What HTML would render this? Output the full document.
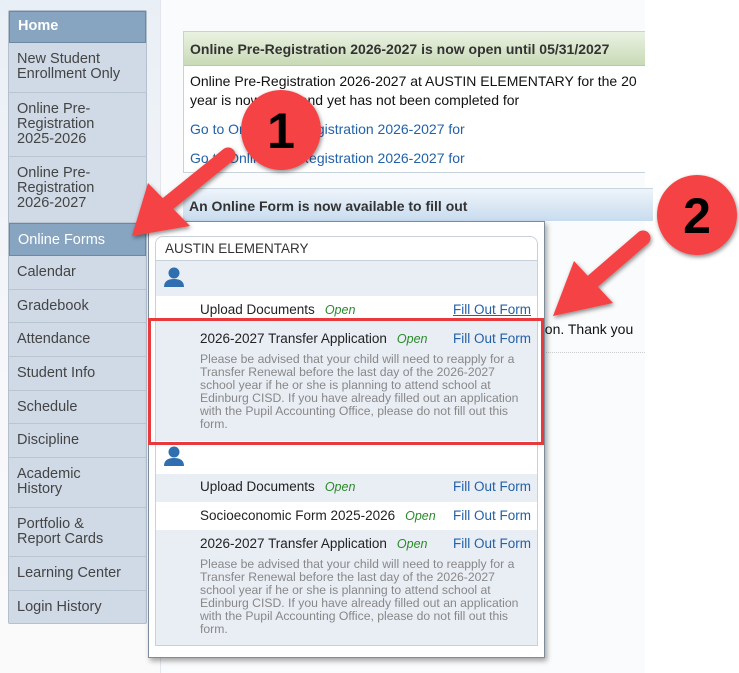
<!DOCTYPE html>
<html><head><meta charset="utf-8"><style>
*{margin:0;padding:0;box-sizing:border-box}
body{width:739px;height:673px;overflow:hidden;background:#fff;font-family:"Liberation Sans",Arial,sans-serif;position:relative}
.bgl{position:absolute;left:0;top:0;width:160px;height:673px;background:linear-gradient(#e9eff6,#f7f8fa 400px,#fafafa)}
.main{position:absolute;left:160px;top:0;width:485px;height:673px;background:#fafbfc;border-left:1px solid #e2e6ea}
.side{position:absolute;left:8px;top:10px;width:139px;border:1px solid #b4c0cc;border-radius:2px;background:#cfdae6}
.side div{border-bottom:1px solid #b9c5d1;color:#444;font-size:14.5px;line-height:15px;padding:9px 30px 8px 8px}
.side .sel{background:#87a5c0;color:#fff;border:1px solid #6c88a2}
.p1{position:absolute;left:183px;top:31px;width:470px;height:142px;border:1px solid #c8d2da;background:#fff}
.p1 .h{height:34px;background:linear-gradient(#eaf2e2,#c8dab6);font-weight:bold;font-size:14px;color:#333;padding:9px 6px;border-bottom:1px solid #b8c8a8}
.t{position:absolute;font-size:14px;color:#111;white-space:nowrap}
.a{color:#2362a8}
.p2h{position:absolute;left:183px;top:188px;width:470px;height:33px;background:linear-gradient(#eef4fa,#c8dcef);border-top:1px solid #c8d4e0;font-weight:bold;font-size:14px;color:#333;padding:9px 6px}
.pop{position:absolute;left:148px;top:221px;width:397px;height:437px;background:#fff;border:1px solid #7d8c9c;box-shadow:2px 3px 5px rgba(0,0,0,.35)}
.box{position:absolute;left:6px;top:14px;width:383px;height:410px;border:1px solid #c8d0da;border-radius:8px 8px 0 0;background:#e9edf4;overflow:hidden}
.r{position:absolute;left:0;width:100%}
.w{background:#fff}
.nm{position:absolute;left:44px;font-size:13.5px;color:#222;white-space:nowrap}
.op{color:#2a8a2a;font-style:italic;font-size:12.5px;margin-left:10px}
.ff{position:absolute;left:297px;font-size:13.5px;color:#2362a8}
.ds{position:absolute;left:44px;width:332px;font-size:12.2px;line-height:13px;color:#888}
.ic{position:absolute;left:7px}
</style></head><body>
<div class="bgl"></div>
<div class="main"></div>
<div class="side">
<div class="sel" style="font-weight:bold;height:32px;padding-top:7px">Home</div>
<div style="height:50px;padding-right:4px">New Student Enrollment Only</div>
<div style="height:64px">Online Pre-Registration 2025-2026</div>
<div style="height:66px">Online Pre-Registration 2026-2027</div>
<div class="sel" style="height:33px">Online Forms</div>
<div style="height:34px">Calendar</div>
<div style="height:33px">Gradebook</div>
<div style="height:34px">Attendance</div>
<div style="height:34px">Student Info</div>
<div style="height:33px">Schedule</div>
<div style="height:34px">Discipline</div>
<div style="height:50px;padding-right:40px">Academic History</div>
<div style="height:49px">Portfolio &amp; Report Cards</div>
<div style="height:34px;padding-right:4px">Learning Center</div>
<div style="height:32px;border-bottom:none;padding-right:4px">Login History</div>
</div>
<div class="p1"><div class="h">Online Pre-Registration 2026-2027 is now open until 05/31/2027</div></div>
<div class="t" style="left:190px;top:73px">Online Pre-Registration 2026-2027 at AUSTIN ELEMENTARY for the 20</div>
<div class="t" style="left:190px;top:92px">year is now open and yet has not been completed for</div>
<div class="t a" style="left:190px;top:121px">Go to Online Pre-Registration 2026-2027 for</div>
<div class="t a" style="left:190px;top:150px">Go to Online Pre-Registration 2026-2027 for</div>
<div style="position:absolute;left:645px;top:0;width:94px;height:673px;background:#fff"></div>
<div class="p2h">An Online Form is now available to fill out</div>
<div class="t" style="left:530px;top:321px">ation. Thank you</div>
<div style="position:absolute;left:540px;top:352px;width:105px;border-top:1px dotted #ccc"></div>
<div class="pop"><div class="box">
<div class="r w" style="top:0;height:24px;border-bottom:1px solid #c8d0da"><span style="position:absolute;left:9px;top:4px;font-size:13.5px;color:#333">AUSTIN ELEMENTARY</span></div>
<svg class="ic" style="top:30px" width="22" height="20" viewBox="0 0 22 20"><circle cx="11" cy="6" r="5.5" fill="#2f6fb0"/><path d="M1 20 Q1 12 11 12 Q21 12 21 20Z" fill="#2f6fb0"/></svg>
<div class="r w" style="top:59px;height:25px"></div>
<div class="nm" style="top:65px">Upload Documents<span class="op">Open</span></div>
<div class="ff" style="top:65px;text-decoration:underline">Fill Out Form</div>
<div class="nm" style="top:94px">2026-2027 Transfer Application<span class="op">Open</span></div>
<div class="ff" style="top:94px">Fill Out Form</div>
<div class="ds" style="top:116px">Please be advised that your child will need to reapply for a Transfer Renewal before the last day of the 2026-2027 school year if he or she is planning to attend school at Edinburg CISD. If you have already filled out an application with the Pupil Accounting Office, please do not fill out this form.</div>
<div class="r w" style="top:204px;height:33px"></div>
<svg class="ic" style="top:209px" width="22" height="20" viewBox="0 0 22 20"><circle cx="11" cy="6" r="5.5" fill="#2f6fb0"/><path d="M1 20 Q1 12 11 12 Q21 12 21 20Z" fill="#2f6fb0"/></svg>
<div class="nm" style="top:242px">Upload Documents<span class="op">Open</span></div>
<div class="ff" style="top:242px">Fill Out Form</div>
<div class="r w" style="top:265px;height:28px"></div>
<div class="nm" style="top:271px">Socioeconomic Form 2025-2026<span class="op">Open</span></div>
<div class="ff" style="top:271px">Fill Out Form</div>
<div class="nm" style="top:299px">2026-2027 Transfer Application<span class="op">Open</span></div>
<div class="ff" style="top:299px">Fill Out Form</div>
<div class="ds" style="top:321px">Please be advised that your child will need to reapply for a Transfer Renewal before the last day of the 2026-2027 school year if he or she is planning to attend school at Edinburg CISD. If you have already filled out an application with the Pupil Accounting Office, please do not fill out this form.</div>
</div></div>
<div style="position:absolute;left:148px;top:318px;width:396px;height:127px;border:3px solid #e8393c"></div>
<svg style="position:absolute;left:0;top:0" width="739" height="673">
<defs><filter id="s" x="-30%" y="-30%" width="160%" height="160%"><feDropShadow dx="1" dy="2" stdDeviation="2" flood-opacity=".45"/></filter></defs>
<g fill="#f44345" filter="url(#s)">
<line x1="228" y1="155" x2="165" y2="206" stroke="#f44345" stroke-width="15" stroke-linecap="round"/>
<polygon points="132,236 148,183 190,226"/>
<line x1="643" y1="238" x2="585" y2="288" stroke="#f44345" stroke-width="15" stroke-linecap="round"/>
<polygon points="553,316 574,261 613,303"/>
<circle cx="281" cy="130" r="40"/>
<circle cx="697" cy="215" r="40"/>
</g>
<text x="281" y="148" text-anchor="middle" font-family="Liberation Sans" font-weight="bold" font-size="50" fill="#000">1</text>
<text x="697" y="233" text-anchor="middle" font-family="Liberation Sans" font-weight="bold" font-size="50" fill="#000">2</text>
</svg>
</body></html>
